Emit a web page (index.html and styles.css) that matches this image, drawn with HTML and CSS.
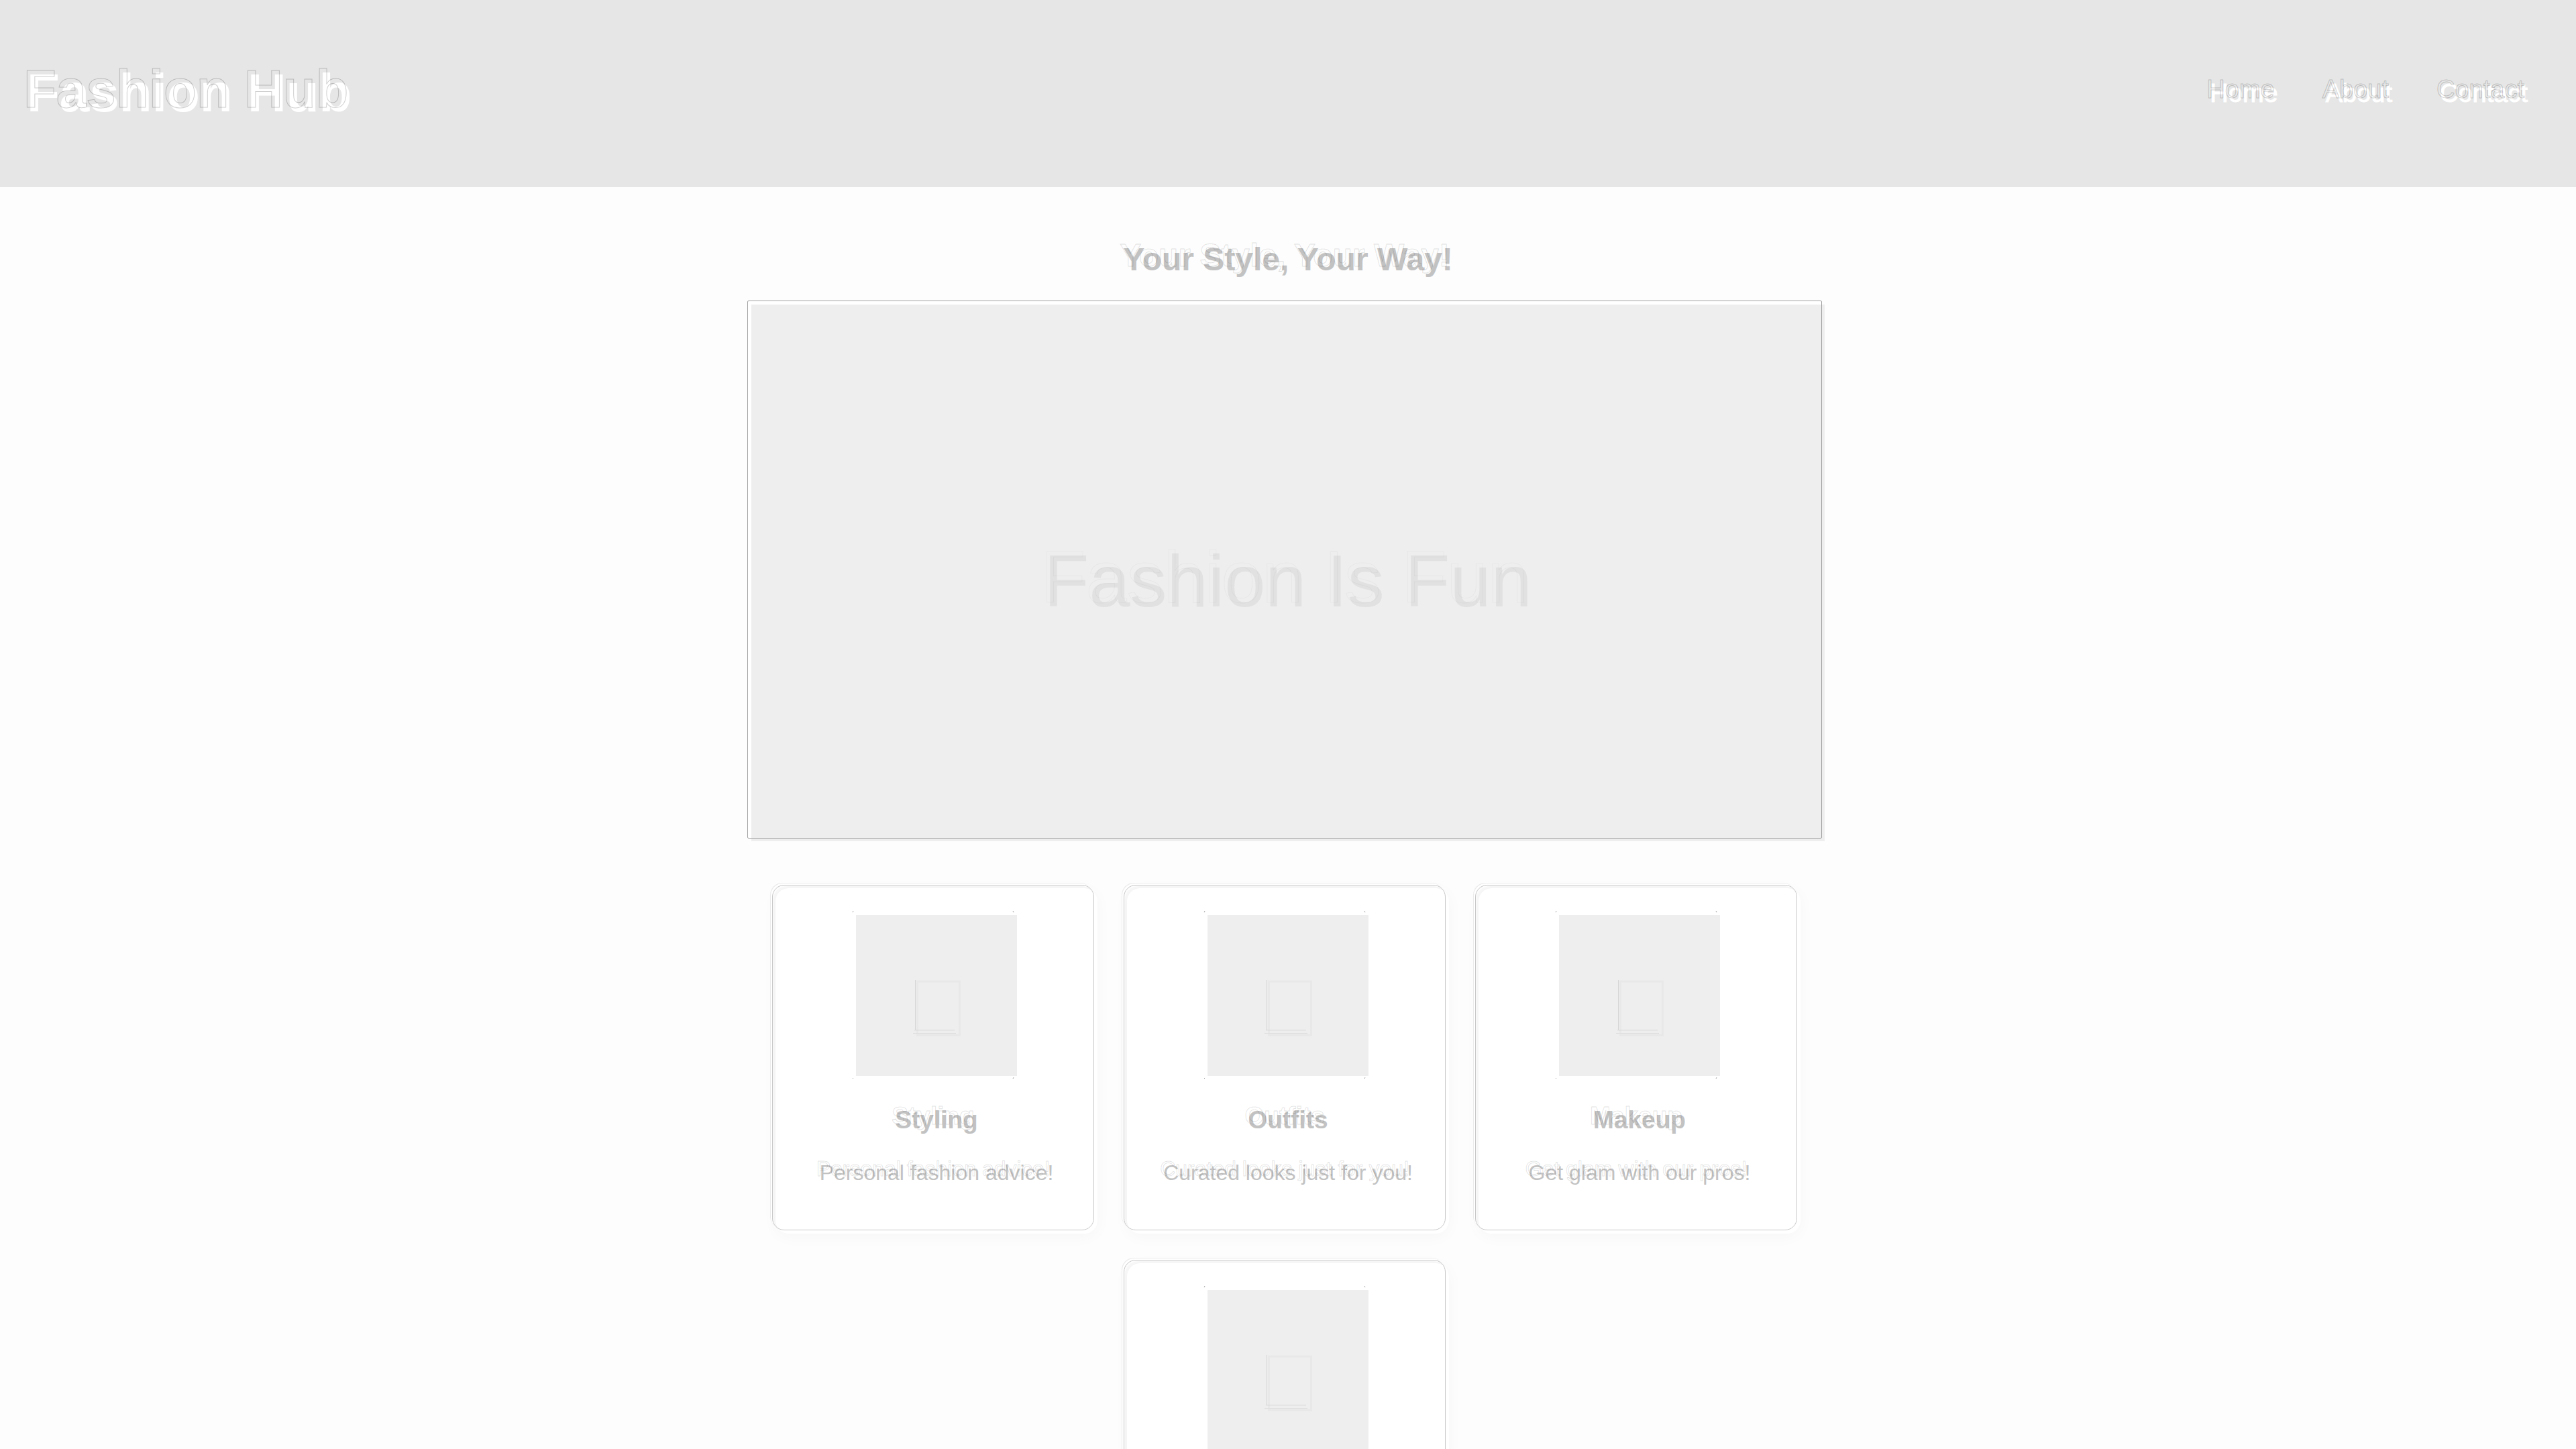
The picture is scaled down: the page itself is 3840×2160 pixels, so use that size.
FILE: index.html
```html
<!DOCTYPE html>
<html lang="en">
<head>
<meta charset="utf-8">
<title>Fashion Hub</title>
<link rel="stylesheet" href="styles.css">
</head>
<body>
<svg class="sprite" aria-hidden="true">
  <symbol id="placeholder" viewBox="0 0 240 240" overflow="visible">
    <path d="M-5-4l1-2M234-6l1 2M-5 243l1 1M234 244l1-2" fill="none" stroke="#a8a8a8"/>
    <rect x="91.500" y="99" width="63" height="80" fill="none" stroke="#e8e8e8" stroke-width="3"/>
    <path d="M88.500 97v74.500M87 171.500h60" fill="none" stroke="#d4d4d4"/>
    <path d="M85 176.500h64" fill="none" stroke="#e0e0e0"/>
  </symbol>
</svg>
<header class="header">
  <h1 class="logo etched" data-text="Fashion Hub">Fashion Hub</h1>
  <nav class="nav">
    <a class="etched" href="#home" data-text="Home">Home</a>
    <a class="etched" href="#about" data-text="About">About</a>
    <a class="etched" href="#contact" data-text="Contact">Contact</a>
  </nav>
</header>
<main class="main">
  <h2 class="tagline etched" data-text="Your Style, Your Way!">Your Style, Your Way!</h2>
  <div class="banner"><span class="etched faint" data-text="Fashion Is Fun">Fashion Is Fun</span></div>
  <section class="cards">
    <article class="card">
      <svg class="thumb"><use href="#placeholder"/></svg>
      <h3 class="etched" data-text="Styling">Styling</h3>
      <p class="etched" data-text="Personal fashion advice!">Personal fashion advice!</p>
    </article>
    <article class="card">
      <svg class="thumb"><use href="#placeholder"/></svg>
      <h3 class="etched" data-text="Outfits">Outfits</h3>
      <p class="etched" data-text="Curated looks just for you!">Curated looks just for you!</p>
    </article>
    <article class="card">
      <svg class="thumb"><use href="#placeholder"/></svg>
      <h3 class="etched" data-text="Makeup">Makeup</h3>
      <p class="etched" data-text="Get glam with our pros!">Get glam with our pros!</p>
    </article>
    <article class="card">
      <svg class="thumb"><use href="#placeholder"/></svg>
    </article>
  </section>
</main>
</body>
</html>
```
FILE: styles.css
```css
* { box-sizing: border-box; }
html { height: 100%; }
body {
  margin: 0;
  height: 100%;
  overflow: hidden;
  background: #fdfdfd;
  color: #c2c2c2;
  font: 32px/36px "Liberation Sans", Arial, sans-serif;
}
h1, h2, h3, p { margin: 0; }
.sprite { position: absolute; width: 0; height: 0; }

.header {
  display: flex;
  align-items: center;
  justify-content: space-between;
  padding: 93px 72px 94px 40px;
  background: #e6e6e6;
  color: #fff;
}
.logo { font-size: 80px; line-height: 92px; }
.nav { display: flex; gap: 71px; font-size: 38px; line-height: 44px; }
.nav a { color: inherit; text-decoration: none; -webkit-text-stroke: 1px #fff; }

/* Thin outline copy, raised up and to the left of the text */
.etched { position: relative; }
.etched::after {
  content: attr(data-text);
  position: absolute;
  left: -5px;
  top: -6px;
  width: 100%;
  white-space: nowrap;
  color: transparent;
  -webkit-text-stroke: 1px rgba(0, 0, 0, 0.12);
}
.header .etched::after { -webkit-text-stroke-color: rgba(0, 0, 0, 0.2); }
.banner .faint::after { -webkit-text-stroke-color: rgba(0, 0, 0, 0.03); }

.main {
  display: flex;
  flex-direction: column;
  align-items: center;
  padding: 80px 40px;
}
.tagline { font-size: 48px; line-height: 56px; }
.banner {
  position: relative;
  display: flex;
  align-items: center;
  justify-content: center;
  width: 100%;
  max-width: 1600px;
  aspect-ratio: 2;
  margin: 39px 0 70px;
  padding-top: 24px;
  background: #eee;
  box-shadow: -5px -5px 0 #fff;
  color: #e1e1e1;
  font-size: 110px;
  line-height: 126px;
}
.banner::before {
  content: "";
  position: absolute;
  inset: -6px 4px 4px -6px;
  border: 1px solid #a0a0a0;
  border-radius: 2px;
}

.cards {
  display: flex;
  flex-wrap: wrap;
  justify-content: center;
  gap: 44px;
  width: 100%;
  max-width: 1600px;
}
.card {
  position: relative;
  display: flex;
  flex-direction: column;
  align-items: center;
  width: 480px;
  min-height: 515px;
  padding: 40px;
  background: #fff;
  border-radius: 20px;
  box-shadow: 0 4px 24px rgba(0, 0, 0, 0.03), -3px -3px 0 #f8f8f8;
}
.card::before {
  content: "";
  position: absolute;
  inset: -5px 5px 5px -5px;
  border: 1px solid #c8c8c8;
  border-radius: 18px;
  box-shadow: -2px -2px 0 #fff, -3px -3px 0 #ececec;
}
.thumb { width: 240px; height: 240px; background: #eee; overflow: visible; }
.card h3 { margin-top: 45px; font-size: 37px; line-height: 42px; }
.card p { margin-top: 39px; white-space: nowrap; }
```
